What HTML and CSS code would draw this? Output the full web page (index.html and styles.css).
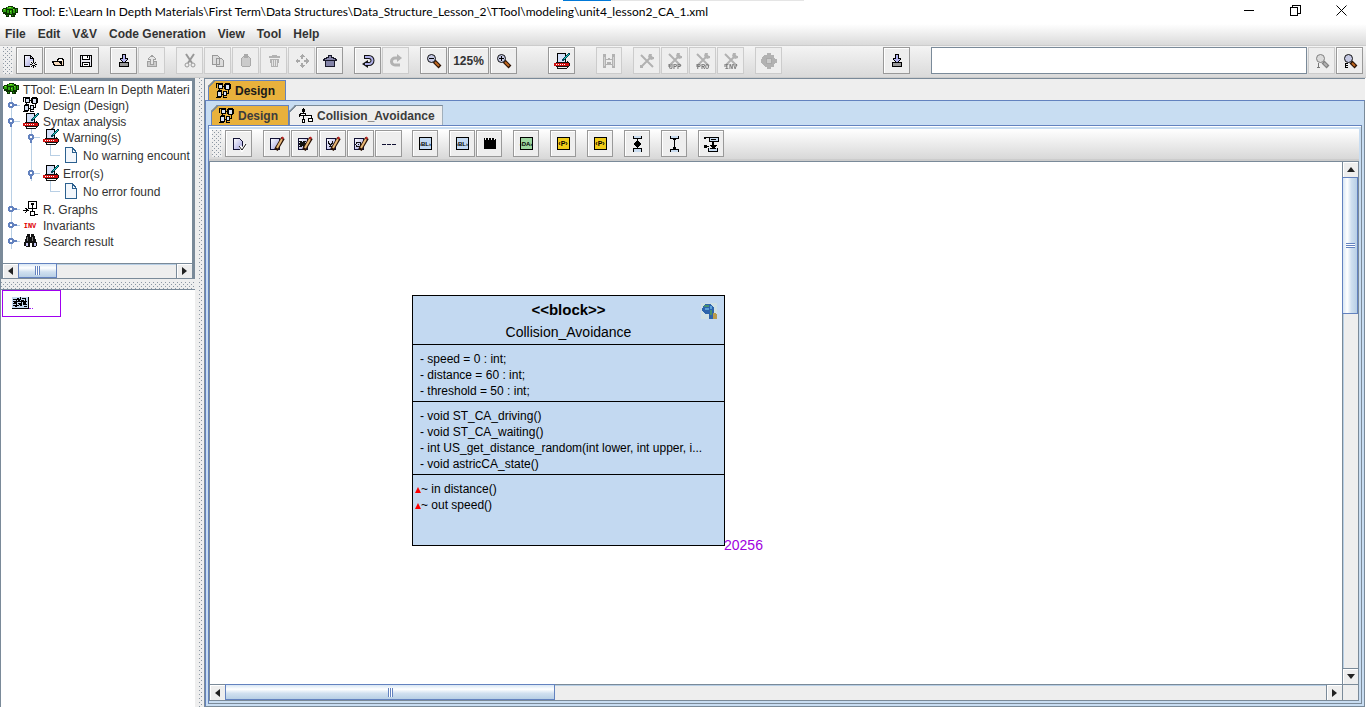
FILE: index.html
```
<!DOCTYPE html>
<html lang="en">
<head>
<meta charset="utf-8">
<title>TTool</title>
<link rel="stylesheet" href="styles.css">
</head>
<body>
<svg class="defs" aria-hidden="true">
  <defs>
    <linearGradient id="lav" x1="0" y1="0" x2="1" y2="1"><stop offset="0" stop-color="#fff"/><stop offset="1" stop-color="#a0a0e0"/></linearGradient>
    <symbol id="turtle" viewBox="0 0 16 16"><path fill="#0a3300" d="M4 3h2V2h5v1h2v1h3v5h-2v2h-1v2H9v-2H7v2H4v-2H3v-1H1V8H0V5h1V4h3z"/><path fill="#2ca010" d="M1 5h3v3H1zM5 3h6v2H5zM11 5h2v4h-2zM5 6h2v3H5zM8 6h2v4H8zM5 11h1v1H5zM10 11h1v1h-1zM14 5h1v3h-1z"/><path fill="#7cf020" d="M2 5h1v1H2zM7 3h2v1H7zM8 7h1v1H8zM11 5h1v1h-1z"/></symbol>
    <symbol id="new" viewBox="0 0 16 16"><path fill="url(#lav)" stroke="#000" d="M2.500 2.500h6l3 3v8h-9z"/><path fill="none" stroke="#000" d="M8.500 2.500v3h3"/><path fill="#eee" d="M8 8h7v7H8z"/><path fill="#000" d="M11 8h1v2h-1zM11 12h1v3h-1zM8 11h2v1H8zM13 11h2v1h-2zM9 9h1v1H9zM13 9h1v1h-1zM9 13h1v1H9zM13 13h1v1h-1zM10 10h1v1h-1zM12 10h1v1h-1zM10 12h1v1h-1zM12 12h1v1h-1z"/></symbol>
    <symbol id="open" viewBox="0 0 16 16"><path fill="#f6d9bb" stroke="#000" d="M4.500 12.500l-2-4h5v-2h1v-1h4v1h1v6z"/><path fill="#fff" d="M9 6h3v2H9z"/><path stroke="#000" d="M7 8.500h4l1 3"/></symbol>
    <symbol id="save" viewBox="0 0 16 16"><path fill="#e8e8f0" stroke="#000" d="M2.500 2.500h11v11h-11z"/><path fill="#fff" stroke="#000" d="M4.500 2.500h7v4h-7zM4.500 9.500h7v4h-7z"/><path fill="#000" d="M9 3h1v2H9zM6 11h4v1H6z"/></symbol>
    <symbol id="import" viewBox="0 0 16 16"><path fill="#999" stroke="#000" d="M3.500 9.500h9v4h-9z"/><path fill="#b4b4f0" stroke="#000" d="M6.500 1.500h3v4h2v1l-3.500 3.500-3.500-3.500v-1h2z"/></symbol>
    <symbol id="export" viewBox="0 0 16 16"><path fill="#aaa" stroke="#555" d="M3.500 8.500h9v5h-9z"/><path fill="#ddd" stroke="#555" d="M6.500 11.500h3v-5h2v-1l-3.500-3-3.500 3v1h2z"/></symbol>
    <symbol id="cut" viewBox="0 0 16 16"><g class="smooth"><path fill="none" stroke="#444" stroke-width="2" d="M4 1l6 9M12 1L6 10"/><circle cx="5" cy="12" r="2" fill="none" stroke="#444" stroke-width="1"/><circle cx="11" cy="12" r="2" fill="none" stroke="#444" stroke-width="1"/></g></symbol>
    <symbol id="copy" viewBox="0 0 16 16"><path fill="#ccc" stroke="#444" d="M2.500 2.500h5l2 2v7h-7zM6.500 5.500h5l2 2v6h-7z"/></symbol>
    <symbol id="paste" viewBox="0 0 16 16"><path fill="#aaa" stroke="#666" d="M5.500 3.500h5l2 2v7l-1 1h-7l-1-1v-7z"/><path fill="#666" d="M6 1h4v4H6z"/></symbol>
    <symbol id="trash" viewBox="0 0 16 16"><path fill="#777" d="M3 3h11v2H3zM6 2h5v1H6zM4 6h9l-1 8H5z"/><path stroke="#ddd" d="M6.500 7v6M8.500 7v6M10.500 7v6"/></symbol>
    <symbol id="move" viewBox="0 0 16 16"><path fill="#666" d="M8 1l3 3H5zM8 15l3-3H5zM1 8l3-3v6zM15 8l-3-3v6zM7 4h2v2H7zM7 10h2v2H7zM4 7h2v2H4zM10 7h2v2h-2z"/></symbol>
    <symbol id="home" viewBox="0 0 16 16"><path fill="#8484a8" stroke="#181828" d="M1.500 6.500l4-2h1v-2h3v2h1l4 2v1h-2v6h-9v-6h-2z"/><path stroke="#181828" d="M3 7.500h10"/></symbol>
    <symbol id="undo" viewBox="0 0 16 16"><g class="smooth"><path fill="none" stroke="#111" stroke-width="4" d="M4 4h5a3 3 0 0 1 0 7H7"/><path fill="#111" d="M2 11l6-4v8z"/><path fill="none" stroke="#b0b0e8" stroke-width="2" d="M5 4h4a3 3 0 0 1 0 7H5"/></g></symbol>
    <symbol id="redo" viewBox="0 0 16 16"><g class="smooth"><path fill="none" stroke="#777" stroke-width="3" d="M12 12H7a3.500 3.500 0 0 1 0-7h4"/><path fill="#777" d="M9 1l5 4-5 4z"/></g></symbol>
    <symbol id="zoomout" viewBox="0 0 16 16"><g class="smooth"><path stroke="#2a1205" stroke-width="4" d="M8 8l6 6"/><path stroke="#c06820" stroke-width="2" d="M9 9l4 4"/><circle cx="5.500" cy="5.500" r="4" fill="#c4c8e4" stroke="#111"/></g><path stroke="#000" d="M3 5.500h5"/></symbol>
    <symbol id="zoomin" viewBox="0 0 16 16"><use href="#zoomout"/><path stroke="#000" d="M5.500 3v5"/></symbol>
    <symbol id="lens" viewBox="0 0 16 16"><g class="smooth"><path stroke="#2a1205" stroke-width="4" d="M9 9l5 5"/><path stroke="#c06820" stroke-width="2" d="M10 10l3 3"/><circle cx="6.500" cy="5.500" r="4" fill="#c4c8e4" stroke="#111"/></g></symbol>
    <symbol id="check" viewBox="0 0 16 16"><path fill="#d4e0f8" stroke="#000" d="M3.500.500h8v13h-8z"/><path fill="#d01010" d="M0 10h15v3H0z"/><path fill="#fff" d="M2 11h1v1H2zM4 11h1v1H4zM6 11h1v1H6zM8 11h1v1H8zM10 11h1v1h-1z"/><path fill="#111" d="M2 9h11v1H2zM2 13h12v1H2zM3 15h10v1H3zM3 14h1v1H3zM13 8h1v1h1v1h1v3h-1v1h-1v1h-1z"/><path fill="#d01010" d="M13 10h2v3h-2z"/><path fill="#045" d="M14 0h2v2h-1v1h-1v1h-1v1h-1v1h-1v1h-1v1H8V6h1V5h1V4h1V3h1V2h1V1h1z"/><path fill="#30d8c8" d="M14 1h1v1h-1v1h-1v1h-1v1h-1v1h-1V5h1V4h1V3h1V2h1z"/></symbol>
    <symbol id="gate" viewBox="0 0 16 16"><path fill="#777" d="M2 1h3v14H2zM11 1h3v14h-3zM5 6h2v1H5zM9 6h2v1H9zM7 5h2v2H7zM6 9h4v3H6zM5 11h6v1H5z"/><path fill="#bbb" d="M3 4h1v9H3zM12 4h1v9h-1z"/></symbol>
    <symbol id="tools" viewBox="0 0 16 16"><g class="smooth"><path stroke="#777" stroke-width="2" d="M2 2l12 12M13 3L2 14"/><path fill="#777" d="M10 1h3l-1 3 3 0v2l-3 1-3-3zM1 12h3v3H1z"/></g></symbol>
    <symbol id="gear" viewBox="0 0 16 16"><path fill="#777" d="M6 0h4v2h2l1 1 1 3h2v4h-2l-1 3-1 1h-2v2H6v-2H4l-2-2-1-2H0V6h1l1-3 2-1h2z"/><circle cx="8" cy="8" r="3" fill="#aaa" stroke="#666"/></symbol>
    <symbol id="design" viewBox="0 0 16 16"><path fill="#d7e2f4" stroke="#000" d="M2.500 1.500h4v4h-4zM1.500 8.500h4v5h-4zM9.500 1.500h4v5h-4zM7.500 8.500h3v4h-3z"/><path fill="none" stroke="#000" d="M0 .500h7M.500 1v4M6 3.500h3M3.500 5v4M2 7.500h4M5 11.500h3M10 10.500h2v-4M0 14.500h5M14.500 1v5M9 .500h5M8.500 1v5M7.500 13v1h3"/></symbol>
    <symbol id="state" viewBox="0 0 16 16"><path stroke="#000" fill="#fff" d="M5.500 0v6M5.500 7.500v4M7 7.500h6v3M4.500 1.500h2v2h-2zM2.500 5.500h5v2h-5zM4.500 11.500h2v3h-2zM10.500 10.500h4v3h-4zM1.500 6v3"/></symbol>
    <symbol id="graph" viewBox="0 0 16 16"><path fill="#fff" stroke="#000" d="M5.500.500h8v7h-8zM9.500 4v3M9.500 8v3M7.500 10.500h4v4h-4zM0 9.500h6M2 7l3 2-3 3M11 13.500h4"/><circle cx="9.500" cy="3" r="1" fill="#fff" stroke="#000"/></symbol>
    <symbol id="binoc" viewBox="0 0 16 16"><path fill="#111" d="M4 1h3v3h1V1h3v2h1v3h1v3h1v4h-1v1H9v-4H7v4H3v-1H1V9h1V6h1V3h1z"/><path fill="#c8c8f4" d="M3 10h2v3H3zM11 10h2v3h-2z"/><path fill="#777" d="M4 4h1v4H4zM9 4h1v4H9z"/></symbol>
    <symbol id="file" viewBox="0 0 16 16"><path fill="#f3f7fc" stroke="#2b608f" d="M2.500.500h7l4 5v9.500h-11z"/><path fill="none" stroke="#2b608f" d="M9.500 1v4.500h4"/></symbol>
    <symbol id="pagecheck" viewBox="0 0 16 16"><path fill="url(#lav)" stroke="#113" d="M2.500 2.500h6l3 3v8h-9z"/><path class="smooth" stroke="#fff" stroke-width="3" fill="none" d="M9 10l2 4 4-6"/><path class="smooth" stroke="#111" fill="none" d="M8 10l3 4 4-6"/></symbol>
    <symbol id="edit" viewBox="0 0 16 16"><path fill="url(#lav)" stroke="#113" d="M1.500 2.500h9v11h-9z"/></symbol>
    <symbol id="pencil" viewBox="0 0 16 16"><g class="smooth"><path stroke="#2a1205" stroke-width="4" d="M14 2L8 12l-1 2"/><path stroke="#e8b878" stroke-width="2" d="M13 3L8 12"/><path stroke="#c02020" stroke-width="2" d="M14 1l-1 2"/></g></symbol>
    <symbol id="person" viewBox="0 0 16 16"><path fill="#c9dcf0" stroke="#000" d="M4.500 0v2.500h8V0M4.500 16v-3.500h8V16"/><path fill="#000" d="M8 3h1v10H8zM7 5h3v1h1v1h1v2h-1v1h-1v1H7v-1H6V9H5V7h1V6h1z"/></symbol>
    <symbol id="ibeam" viewBox="0 0 16 16"><path fill="#c9dcf0" stroke="#000" d="M4.500 0v2.500h8V0M4.500 16v-2.500h8V16M8.500 3v10"/><path fill="#000" d="M7 2h3v2H7zM7 11h3v2H7z"/></symbol>
    <symbol id="combo" viewBox="0 0 16 16"><path fill="#c9dcf0" stroke="#000" d="M6.500 1.500h9v4h-9zM1 1.500h5M8 3.500h5M1 10.500h5M5.500 12v3h9v-3"/><path fill="#000" d="M1 1h2v2H1zM1 9h3v3H1zM9 6h2v3h3l-4 4-4-4h3zM7 12h6v1H7z"/></symbol>
    <symbol id="collapsed" viewBox="0 0 20 16"><path stroke="#b8cfe5" d="M8.500 0v16"/><path stroke="#6382bf" stroke-width="2" d="M9 8h5"/><path stroke="#b8cfe5" d="M14 8.500h3"/><circle cx="8" cy="8" r="2" fill="#fff" stroke="#6382bf" stroke-width="2"/></symbol>
    <symbol id="expanded" viewBox="0 0 20 16"><path stroke="#b8cfe5" d="M8.500 0v16M10 8.500h7"/><path stroke="#6382bf" stroke-width="2" d="M8 9v5"/><circle cx="8" cy="8" r="2" fill="#fff" stroke="#6382bf" stroke-width="2"/></symbol>
  </defs>
</svg>

<header class="titlebar">
  <svg class="ico"><use href="#turtle"/></svg>
  <h1>TTool: E:\Learn In Depth Materials\First Term\Data Structures\Data_Structure_Lesson_2\TTool\modeling\unit4_lesson2_CA_1.xml</h1>
  <span class="progress"><span></span></span>
  <div class="winctl">
    <button aria-label="Minimize"><svg viewBox="0 0 11 11"><path d="M0 5.500h10"/></svg></button>
    <button aria-label="Restore"><svg viewBox="0 0 11 11"><path d="M.500 2.500h7v8h-7zM2.500 2v-1.500h8v8H8"/></svg></button>
    <button aria-label="Close"><svg class="smooth" viewBox="0 0 11 11"><path d="M.500.500l10 10M10.500.500l-10 10"/></svg></button>
  </div>
</header>

<nav class="menubar">
  <button>File</button><button>Edit</button><button>V&amp;V</button><button>Code Generation</button><button>View</button><button>Tool</button><button>Help</button>
</nav>

<div class="toolbar main">
  <span class="grip"></span>
  <div class="group"><button aria-label="New"><svg class="ico"><use href="#new"/></svg></button><button aria-label="Open"><svg class="ico"><use href="#open"/></svg></button><button aria-label="Save"><svg class="ico"><use href="#save"/></svg></button></div>
  <div class="group"><button aria-label="Import"><svg class="ico"><use href="#import"/></svg></button><button disabled aria-label="Export"><svg class="ico"><use href="#export"/></svg></button></div>
  <div class="group"><button disabled aria-label="Cut"><svg class="ico"><use href="#cut"/></svg></button><button disabled aria-label="Copy"><svg class="ico"><use href="#copy"/></svg></button><button disabled aria-label="Paste"><svg class="ico"><use href="#paste"/></svg></button><button disabled aria-label="Delete"><svg class="ico"><use href="#trash"/></svg></button><button disabled aria-label="Move"><svg class="ico"><use href="#move"/></svg></button><button aria-label="Home"><svg class="ico"><use href="#home"/></svg></button></div>
  <div class="group"><button aria-label="Undo"><svg class="ico"><use href="#undo"/></svg></button><button disabled aria-label="Redo"><svg class="ico"><use href="#redo"/></svg></button></div>
  <div class="group far"><button aria-label="Zoom out"><svg class="ico"><use href="#zoomout"/></svg></button><button class="zoom">125%</button><button aria-label="Zoom in"><svg class="ico"><use href="#zoomin"/></svg></button></div>
  <div class="group mid"><button aria-label="Check syntax"><svg class="ico"><use href="#check"/></svg></button></div>
  <div class="group narrow"><button disabled aria-label="Gate"><svg class="ico"><use href="#gate"/></svg></button></div>
  <div class="group"><button disabled aria-label="Tools"><svg class="ico"><use href="#tools"/></svg></button><button disabled aria-label="UPP"><svg class="ico wide" viewBox="0 0 20 18"><use href="#tools" x="2" y="0" width="16" height="16"/><text x="10" y="17">UPP</text></svg></button><button disabled aria-label="PRO"><svg class="ico wide" viewBox="0 0 20 18"><use href="#tools" x="2" y="0" width="16" height="16"/><text x="10" y="17">PRO</text></svg></button><button disabled aria-label="INV"><svg class="ico wide" viewBox="0 0 20 18"><use href="#tools" x="2" y="0" width="16" height="16"/><text x="10" y="17">INV</text></svg></button></div>
  <div class="group apart"><button disabled aria-label="Run"><svg class="ico"><use href="#gear"/></svg></button></div>
  <div class="group mid"><button aria-label="Import model"><svg class="ico"><use href="#import"/></svg></button></div>
  <div class="search"><input type="text" aria-label="Search"><button disabled aria-label="Search internally"><svg class="ico" viewBox="0 0 16 16"><use href="#lens"/><path stroke="#000" d="M4.500 10v5M3 14.500h3"/></svg></button><button aria-label="Search externally"><svg class="ico" viewBox="0 0 16 16"><use href="#lens"/><path stroke="#000" fill="none" d="M6 10.500H3.500v4H6M4 12.500h2"/></svg></button></div>
</div>

<main class="workspace">
  <aside class="side">
    <section class="treepane">
      <ul class="tree">
        <li><svg class="ico"><use href="#turtle"/></svg><span>TTool: E:\Learn In Depth Materi</span></li>
        <li><svg class="guide"><use href="#collapsed"/></svg><svg class="ico"><use href="#design"/></svg><span>Design (Design)</span></li>
        <li><svg class="guide"><use href="#expanded"/></svg><svg class="ico"><use href="#check"/></svg><span>Syntax analysis</span></li>
        <li><i class="guide line"></i><svg class="guide"><use href="#expanded"/></svg><svg class="ico"><use href="#check"/></svg><span>Warning(s)</span></li>
        <li class="leaf"><i class="guide line"></i><i class="guide line"></i><i class="guide elbow"></i><svg class="ico"><use href="#file"/></svg><span>No warning encount</span></li>
        <li><i class="guide line"></i><svg class="guide"><use href="#expanded"/></svg><svg class="ico"><use href="#check"/></svg><span>Error(s)</span></li>
        <li class="leaf"><i class="guide line"></i><i class="guide"></i><i class="guide elbow"></i><svg class="ico"><use href="#file"/></svg><span>No error found</span></li>
        <li><svg class="guide"><use href="#collapsed"/></svg><svg class="ico"><use href="#graph"/></svg><span>R. Graphs</span></li>
        <li><svg class="guide"><use href="#collapsed"/></svg><svg class="ico inv" viewBox="0 0 16 16"><text x="7" y="11">INV</text></svg><span>Invariants</span></li>
        <li><svg class="guide"><use href="#collapsed"/></svg><svg class="ico"><use href="#binoc"/></svg><span>Search result</span></li>
      </ul>
      <div class="scroll horiz small"><button class="arrow left" aria-label="Scroll left"></button><div class="track"><div class="thumb"></div></div><button class="arrow right" aria-label="Scroll right"></button></div>
    </section>
    <div class="split across"></div>
    <section class="overview">
      <div class="viewport"><svg viewBox="0 0 24 14"><path fill="#c3d9f1" d="M0 0h17v12H0z"/><path fill="#000" d="M0 11h17v1H0zM16 0h1v12h-1zM1 2h3v1H1zM5 1h2v2H5zM8 0h1v3H8zM10 1h4v1h-4zM1 4h5v1H1zM7 4h8v1H7zM2 5h3v2H2zM6 6h4v1H6zM11 5h2v3h-2zM1 8h6v1H1zM8 7h2v2H8zM12 9h3v1h-3zM3 9h2v1H3zM4 2h1v6H4zM9 3h1v5H9zM13 2h1v5h-1zM6 2h2v3H6zM10 3h2v2h-2zM1 6h3v1H1zM7 6h3v2H7zM13 7h2v1h-2z"/><path fill="#a020f0" d="M17 11h2v1h-2zM20 11h1v1h-1z"/></svg></div>
    </section>
  </aside>
  <div class="split down"></div>

  <section class="outer">
    <div class="tabs"><button class="tab on"><svg class="ico"><use href="#design"/></svg>Design</button></div>
    <div class="outerbody">
      <div class="tabs"><button class="tab on soft"><svg class="ico"><use href="#design"/></svg>Design</button><button class="tab soft long"><svg class="ico"><use href="#state"/></svg>Collision_Avoidance</button></div>
      <div class="innerbody">
        <div class="toolbar sub">
          <span class="grip"></span>
          <div class="group"><button aria-label="Check"><svg class="ico"><use href="#pagecheck"/></svg></button></div>
          <div class="group near"><button aria-label="Edit"><svg class="ico" viewBox="0 0 16 16"><use href="#edit"/><use href="#pencil"/></svg></button><button aria-label="Edit star"><svg class="ico" viewBox="0 0 16 16"><use href="#edit"/><path stroke="#111" stroke-width="2" d="M3 5l5 6M8 5l-5 6M2 8h7"/><use href="#pencil"/></svg></button><button aria-label="Edit link"><svg class="ico" viewBox="0 0 16 16"><use href="#edit"/><path fill="none" stroke="#111" d="M3.500 5v2l2 2 2-2v-2M4 10.500h3"/><use href="#pencil"/></svg></button><button aria-label="Edit at"><svg class="ico" viewBox="0 0 16 16"><use href="#edit"/><circle cx="5.500" cy="8.500" r="2.500" fill="none" stroke="#111"/><path fill="#111" d="M5 8h1v1H5z"/><use href="#pencil"/></svg></button><button aria-label="Dashed line"><svg class="ico" viewBox="0 0 16 16"><path stroke="#113" d="M1 8.500h4M6 8.500h4M11 8.500h4"/></svg></button></div>
          <div class="group narrow"><button aria-label="Block"><svg class="chip" viewBox="0 0 13 13"><rect width="12" height="12" x=".5" y=".5"/><text x="6" y="9">‹BL›</text></svg></button></div>
          <div class="group narrow"><button aria-label="Block 2"><svg class="chip" viewBox="0 0 13 13"><rect width="12" height="12" x=".5" y=".5"/><text x="6" y="9">‹BL›</text></svg></button><button aria-label="Library"><svg class="chip" viewBox="0 0 13 13"><path d="M1 1h1v2h1V1h2v2h1V1h2v2h1V1h2v2h1V2h1v10H1z"/></svg></button></div>
          <div class="group narrow"><button aria-label="Data"><svg class="chip green" viewBox="0 0 13 13"><rect width="12" height="12" x=".5" y=".5"/><text x="6" y="9">‹DA›</text></svg></button></div>
          <div class="group narrow"><button aria-label="Pragma"><svg class="chip gold" viewBox="0 0 13 13"><rect width="12" height="12" x=".5" y=".5"/><text x="6" y="9">‹P›</text></svg></button></div>
          <div class="group narrow"><button aria-label="Pragma 2"><svg class="chip gold" viewBox="0 0 13 13"><rect width="12" height="12" x=".5" y=".5"/><text x="6" y="9">‹P›</text></svg></button></div>
          <div class="group narrow"><button aria-label="Composition"><svg class="ico"><use href="#person"/></svg></button></div>
          <div class="group narrow"><button aria-label="Link"><svg class="ico"><use href="#ibeam"/></svg></button></div>
          <div class="group narrow"><button aria-label="Connector"><svg class="ico"><use href="#combo"/></svg></button></div>
        </div>
        <div class="scrollpane">
          <div class="canvas">
            <article class="block">
              <header><b>&lt;&lt;block&gt;&gt;</b><span>Collision_Avoidance</span>
                <svg class="dino" viewBox="0 0 16 16"><path fill="#cfe0e4" d="M0 0h16v16H0z"/><path fill="#2c64ac" d="M2 3l2-2h6l3 4v11H8v-5H4L1 7z"/><path fill="#489070" d="M3 2h5v2H3zM9 7h2v5H9z"/><path fill="#5ca0d8" d="M4 5h4v2H4zM9 3h2v3H9z"/><path fill="#b89a4c" d="M12 10h2l2 2v4h-4z"/></svg>
              </header>
              <div class="attrs"><p>- speed = 0 : int;</p><p>- distance = 60 : int;</p><p>- threshold = 50 : int;</p></div>
              <div class="methods"><p>- void ST_CA_driving()</p><p>- void ST_CA_waiting()</p><p>- int US_get_distance_random(int lower, int upper, i...</p><p>- void astricCA_state()</p></div>
              <div class="signals"><p><i></i>~ in distance()</p><p><i></i>~ out speed()</p></div>
              <span class="tag">20256</span>
            </article>
          </div>
          <div class="scroll vert"><button class="arrow up" aria-label="Scroll up"></button><div class="track"><div class="thumb"></div></div><button class="arrow down" aria-label="Scroll down"></button></div>
          <div class="scroll horiz"><button class="arrow left" aria-label="Scroll left"></button><div class="track"><div class="thumb"></div></div><button class="arrow right" aria-label="Scroll right"></button></div>
          <div class="corner"></div>
        </div>
      </div>
    </div>
  </section>
</main>
</body>
</html>
```
FILE: styles.css
```
:root {
  --steel: #7a8a99;
  --blue: #6382bf;
  --sky: #c8ddf2;
  --pale: #b8cfe5;
  --face: #eeeeee;
  --ink: #333333;
}
* { box-sizing: border-box; }
body {
  margin: 0;
  height: 100vh;
  display: flex;
  flex-direction: column;
  overflow: hidden;
  background: #fff;
  color: var(--ink);
  font: 12px/16px "Liberation Sans", Arial, sans-serif;
}
h1, p, ul { margin: 0; padding: 0; }
button { font: inherit; color: inherit; padding: 0; border: 0; background: none; }
svg { shape-rendering: crispEdges; flex: none; }
.smooth { shape-rendering: auto; }
.defs { position: absolute; width: 0; height: 0; }
.ico { width: 16px; height: 16px; display: block; }
.ico text { font: bold 7px "Liberation Mono", monospace; text-anchor: middle; }

.titlebar { position: relative; display: flex; align-items: center; height: 24px; padding: 0 2px; gap: 5px; flex: none; }
.titlebar h1 { flex: 1; font: 12px/16px Lato, "Open Sans", sans-serif; color: #000; white-space: nowrap; }
.progress { position: absolute; top: 0; left: 563px; width: 241px; height: 1px; background: #e5e5e5; }
.progress span { display: block; width: 20%; height: 1px; background: #0078d7; }
.winctl { display: flex; height: 20px; align-self: flex-start; }
.winctl button { width: 46px; display: flex; align-items: center; justify-content: center; }
.winctl svg { width: 11px; height: 11px; fill: none; stroke: #000; }

.menubar { display: flex; gap: 12px; height: 22px; padding: 0 5px; flex: none; background: linear-gradient(#fff, #dadada); border-bottom: 1px solid #ccc; font-weight: bold; }
.menubar button { padding-bottom: 2px; }

.toolbar { display: flex; align-items: flex-start; flex: none; background: linear-gradient(#f4f4f4, #dadada); border-bottom: 1px solid #ccc; }
.toolbar.main { height: 32px; padding: 1px 3px; }
.toolbar.sub { height: 32px; padding: 1px 3px; background: linear-gradient(#fff, #d8d8d8); border-bottom: 2px solid #ccc; }
.grip, .split {
  background-color: var(--face);
  background-image: conic-gradient(at 1px 1px, transparent 270deg, #8c97a3 0), conic-gradient(at 1px 1px, transparent 270deg, #8c97a3 0);
  background-size: 4px 4px;
  background-position: 0 0, 2px 2px;
}
.grip { width: 10px; height: 27px; margin-right: 3px; }
.group { display: flex; gap: 1px; margin-right: 11px; }
.group.near { margin-right: 10px; }
.group.mid { margin-right: 21px; }
.group.far { margin-right: 31px; }
.group.apart { margin-right: 101px; }
.toolbar button { width: 27px; height: 27px; display: flex; align-items: center; justify-content: center; background: var(--face); border: 1px solid #999; box-shadow: inset 1px 1px #fff; }
.toolbar .narrow button { width: 26px; }
.toolbar button.zoom { width: 41px; font-weight: bold; }
.toolbar button:disabled { border-color: #ccc; box-shadow: none; }
.toolbar button:disabled svg { filter: grayscale(1); opacity: .5; }
.ico.wide { width: 20px; height: 18px; }
.search { flex: 1; display: flex; gap: 1px; }
.search input { flex: 1; min-width: 0; height: 27px; border: 1px solid var(--steel); background: #fff; padding: 0 4px; font: inherit; }
.chip { width: 13px; height: 13px; overflow: visible; }
.chip rect { fill: #c3d9f1; stroke: #000; }
.chip.green rect { fill: #9cd6a0; }
.chip.gold rect { fill: #f0cc18; }
.chip text { font: bold 6px "Liberation Sans", sans-serif; text-anchor: middle; fill: #000; }
.chip.gold text { font-size: 7px; }

.workspace { flex: 1; display: flex; min-height: 0; }
.side { width: 195px; display: flex; flex-direction: column; flex: none; border-left: 1px solid var(--steel); }
.treepane { height: 201px; display: flex; flex-direction: column; border: solid var(--steel); border-width: 3px 3px 1px 2px; flex: none; }
.tree { flex: 1; list-style: none; overflow: hidden; }
.tree li { display: flex; align-items: center; height: 16px; gap: 0; white-space: nowrap; }
.tree li.leaf { height: 20px; }
.tree li span { padding: 2px 0 0 4px; }
.guide { width: 20px; height: 100%; flex: none; }
.guide.line { background: linear-gradient(var(--pale), var(--pale)) 8px 0 / 1px 100% no-repeat; }
.guide.elbow { background: linear-gradient(var(--pale), var(--pale)) 7px 0 / 1px 50% no-repeat, linear-gradient(var(--pale), var(--pale)) 7px 50% / 10px 1px no-repeat; }
.inv text { fill: #e00000; }
.split { flex: none; }
.split.across { height: 11px; border-bottom: 1px solid var(--steel); background-position: 2px 2px, 4px 4px; background-clip: padding-box; border-top: 3px solid var(--face); }
.split.down { width: 9px; border: solid var(--face); border-width: 0 1px 0 4px; background-clip: padding-box; }
.overview { flex: 1; padding-left: 1px; }
.viewport { width: 59px; height: 27px; border: 1px solid #a000f0; padding: 6px 9px; }
.viewport svg { display: block; width: 24px; height: 14px; }

.outer { flex: 1; min-width: 0; display: flex; flex-direction: column; margin-right: 1px; padding-top: 1px; background: var(--face); border-left: 1px solid var(--steel); border-top: 1px solid var(--steel); }
.tabs { display: flex; height: 20px; flex: none; padding-left: 3px; }
.tab { position: relative; display: flex; align-items: center; gap: 3px; height: 20px; padding: 0 10px 0 7px; font-weight: bold; background: var(--face); border: 1px solid var(--steel); border-bottom: 0; clip-path: polygon(6px 0, 100% 0, 100% 100%, 0 100%, 0 6px); }
.tab::before { content: ""; position: absolute; left: -1px; top: -1px; width: 7px; height: 7px; background: linear-gradient(135deg, transparent 40%, var(--steel) 40% 58%, transparent 58%); }
.tab.on { color: #1a1a1a; background: #e8b13c; border-color: var(--blue); }
.tab.soft { color: #3c3c3c; }
.tab.long { padding: 0 7px 0 8px; }
.outerbody { flex: 1; min-height: 0; display: flex; flex-direction: column; padding: 4px 2px 2px 2px; background: var(--sky); border: 1px solid var(--steel); border-top-color: var(--blue); border-left-color: var(--blue); }
.outerbody > .tabs { padding-left: 3px; }
.innerbody { flex: 1; min-height: 0; display: flex; flex-direction: column; padding: 3px 2px 2px 0; background: var(--sky); border: 1px solid var(--steel); border-top-color: var(--blue); border-left: 1px solid var(--blue); box-shadow: inset 0 1px #fff; }
.scrollpane { flex: 1; min-height: 0; display: grid; grid-template: 1fr 16px / 1fr 16px; border: 1px solid var(--steel); background: var(--face); }
.canvas { position: relative; background: #fff; overflow: hidden; }

.block { position: absolute; left: 202px; top: 133px; width: 313px; background: #c3d9f1; border: 1px solid #000; color: #000; }
.block header { position: relative; height: 49px; padding: 2px 0 0; display: flex; flex-direction: column; align-items: center; border-bottom: 1px solid #000; font-size: 14px; line-height: 23px; }
.block header b { font-size: 15px; }
.dino { position: absolute; right: 7px; top: 7px; width: 16px; height: 16px; }
.attrs { height: 57px; padding: 6px 7px 0; border-bottom: 1px solid #000; white-space: nowrap; }
.methods { height: 73px; padding: 6px 7px 0; border-bottom: 1px solid #000; white-space: nowrap; }
.signals { height: 70px; padding: 6px 2px 0; }
.signals p { display: flex; align-items: center; }
.signals i { border: solid transparent; border-width: 0 3px 6px; border-bottom-color: #f00; margin-top: 2px; }
.tag { position: absolute; left: 100%; bottom: -8px; color: #a000e0; font-size: 14px; }

.scroll { display: flex; background: var(--face); }
.scroll .track { flex: 1; min-width: 0; min-height: 0; display: flex; }
.scroll.vert { flex-direction: column; border-left: 1px solid var(--steel); }
.scroll.vert .track { flex-direction: column; border: solid var(--steel); border-width: 1px 0; box-shadow: inset 1px 0 var(--pale); }
.scroll.horiz { border-top: 1px solid var(--steel); }
.scroll.horiz .track { border: solid var(--steel); border-width: 0 1px; box-shadow: inset 0 1px var(--pale); }
.thumb { display: flex; align-items: center; justify-content: center; border: 1px solid var(--blue); }
.thumb::after { content: ""; }
.vert .thumb { height: 28%; margin: -1px 0 0 -1px; background: linear-gradient(90deg, #d8e6f4, #fff 30%, #d0e0f0 60%, var(--pale)); }
.vert .thumb::after { width: 9px; height: 5px; background: repeating-linear-gradient(var(--blue) 0 1px, #fff 1px 2px); }
.horiz .thumb { width: 30%; margin: -1px 0 0 -1px; background: linear-gradient(#d8e6f4, #fff 30%, #d0e0f0 60%, var(--pale)); }
.horiz .thumb::after { width: 5px; height: 9px; background: repeating-linear-gradient(90deg, var(--blue) 0 1px, #fff 1px 2px); }
.small { height: 15px; flex: none; }
.small .thumb { width: 25%; }
.arrow { display: flex; align-items: center; justify-content: center; width: 15px; height: 15px; box-shadow: inset 1px 1px #fff; flex: none; }
.arrow::before { content: ""; border: 4px solid transparent; }
.small .arrow { height: 14px; }
.arrow.left::before { border-right: 5px solid #222; border-left: 0; }
.arrow.right::before { border-left: 5px solid #222; border-right: 0; }
.arrow.up::before { border-bottom: 5px solid #222; border-top: 0; }
.arrow.down::before { border-top: 5px solid #222; border-bottom: 0; }
.corner { border: solid var(--steel); border-width: 1px 0 0 1px; }
```
